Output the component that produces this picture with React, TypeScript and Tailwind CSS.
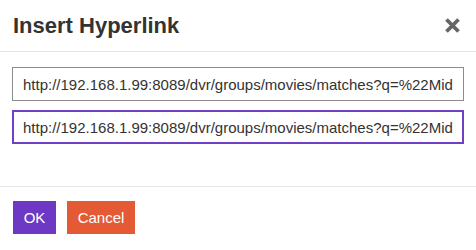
import React from "react";

const URL_VALUE = "http://192.168.1.99:8089/dvr/groups/movies/matches?q=%22Mid";

export default function App() {
  return (
    <div
      className="w-[476px] h-[250px] bg-white text-[#333] overflow-hidden"
      style={{ fontFamily: '"Liberation Sans", Arial, sans-serif' }}
    >
      {/* header */}
      <div className="h-[52px] flex items-center justify-between pl-[13px] pr-[15px] border-b border-[#e5e5e5]">
        <h1 className="text-[22px] font-bold leading-[1.15] text-[#333]">Insert Hyperlink</h1>
        <button className="w-[17px] h-[17px] flex items-center justify-center text-[#666]">
          <svg width="17" height="17" viewBox="0 0 17 17">
            <path d="M2.5 2.5 L14.5 14.5 M14.5 2.5 L2.5 14.5" stroke="#666" strokeWidth="3.8" strokeLinecap="butt" />
          </svg>
        </button>
      </div>

      {/* body */}
      <div className="h-[135px] px-[12px] pt-[15px] border-b border-[#e5e5e5]">
        <input
          readOnly
          value={URL_VALUE}
          className="block w-[452px] h-[34px] px-[10px] border border-[#8c8c8c] text-[15px] text-[#333] outline-none bg-white"
        />
        <input
          readOnly
          value={URL_VALUE}
          className="block w-[452px] h-[34px] mt-[9px] px-[9px] border-2 border-[#6f3fc6] text-[15px] text-[#333] outline-none bg-white"
        />
      </div>

      {/* footer */}
      <div className="flex items-start gap-[11px] pl-[13px] pt-[14px]">
        <button className="h-[33px] w-[43px] bg-[#6c38c4] text-white text-[15px] leading-none">OK</button>
        <button className="h-[33px] w-[68px] bg-[#e35a34] text-white text-[15px] leading-none">Cancel</button>
      </div>
    </div>
  );
}
